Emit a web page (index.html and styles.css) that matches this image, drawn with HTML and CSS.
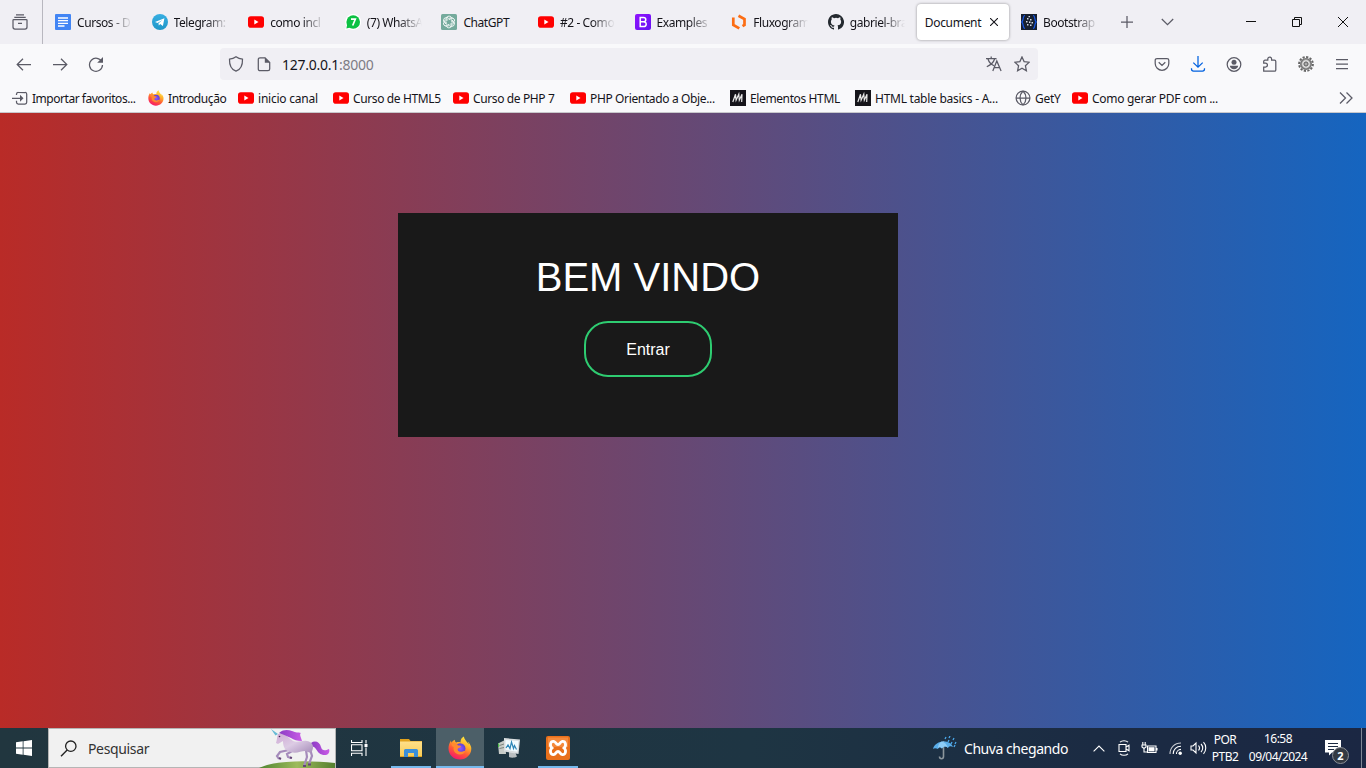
FILE: index.html
```html
<!DOCTYPE html>
<html lang="pt-BR">
<head>
<meta charset="utf-8">
<title>Document</title>
<link rel="stylesheet" href="styles.css">
</head>
<body>
<svg class="defs" width="0" height="0" aria-hidden="true">
  <defs>
    <linearGradient id="fxbody" x1=".8" y1="0" x2=".3" y2="1"><stop offset="0" stop-color="#fff044"/><stop offset=".35" stop-color="#ffb22b"/><stop offset=".65" stop-color="#ff5a36"/><stop offset="1" stop-color="#f5156c"/></linearGradient>
    <radialGradient id="fxglobe"><stop offset="0" stop-color="#9059ff"/><stop offset="1" stop-color="#5b3fd6"/></radialGradient>
    <linearGradient id="tele" x1="0" y1="0" x2="0" y2="1"><stop offset="0" stop-color="#37aee2"/><stop offset="1" stop-color="#1e96c8"/></linearGradient>
    <linearGradient id="bs" x1="0" y1="0" x2="1" y2="1"><stop offset="0" stop-color="#9013fe"/><stop offset="1" stop-color="#6610f2"/></linearGradient>
    <linearGradient id="coat" x1="0" y1="0" x2="1" y2="1"><stop offset="0" stop-color="#cfa9d4"/><stop offset=".5" stop-color="#dccbe4"/><stop offset="1" stop-color="#a58cb8"/></linearGradient>
    <linearGradient id="mane" x1="0" y1="0" x2="1" y2="0"><stop offset="0" stop-color="#8b3cc4"/><stop offset="1" stop-color="#c95be6"/></linearGradient>
    <linearGradient id="hill" x1="0" y1="0" x2="1" y2="0"><stop offset="0" stop-color="#4f8430"/><stop offset=".5" stop-color="#9dbb5b"/><stop offset="1" stop-color="#557f2f"/></linearGradient>
    <linearGradient id="folder" x1="0" y1="0" x2="0" y2="1"><stop offset="0" stop-color="#ffe08a"/><stop offset="1" stop-color="#f9cc56"/></linearGradient>
    <symbol id="yt" viewBox="0 0 16 16"><rect y="2.300" width="16" height="11.400" rx="2.800" fill="#f00"/><path d="M6.300 5.600v4.800L10.500 8z" fill="#fff"/></symbol>
    <symbol id="fx" viewBox="0 0 24 24"><path d="M22.500 9.500c-.6-1.700-1.900-3.200-2.600-3.700.5 1 .8 2 .9 2.800-1.200-2.900-4.300-4.200-4.900-8.200C12.500 2.200 12.500 5 12.600 6.500 11.500 6 9.700 5.900 8.300 6.500 6.900 5.800 6.800 4.200 6.800 3.700 4.900 4.500 3.900 6 3.700 6.500 3.100 6 3 4.900 3 4.400 1.200 7 .5 9.500.5 12.500c0 6.200 5 11 11.400 11 6.300 0 11.400-5 11.400-10.800 0-1-.2-2.200-.8-3.200z" fill="url(#fxbody)"/><circle cx="12.200" cy="12.500" r="5.300" fill="url(#fxglobe)"/><path d="M3.500 8c3-1.500 5.500-.5 6.500 1.500 1.500 0 3 .2 3 1-.3 1.300-2.600 1.400-3.200 2.300-.5 1 .3 3 3 3 2.200 0 3.500-1.500 4.500-1-.5 2.700-3 4-5.800 3.700C7 18 4.500 14 5.800 11c-1-.2-2-1-2.300-3z" fill="#ff8a2f"/></symbol>
    <symbol id="mb" viewBox="0 0 16 16"><path fill="#15141a" d="M0 0h16v16H0z"/><path d="M2.800 12 5.500 4.200l.6 6 2.700-6 .5 6 2.700-6-.3 7.800" fill="none" stroke="#e8e8e8" stroke-width="1.200"/></symbol>
  </defs>
</svg>

<header class="browser">
  <div class="tabstrip">
    <div class="fxview"><svg width="16" height="16" viewBox="0 0 16 16" class="ln"><path d="M1 6.300A.8.8 0 0 1 1.800 5.500h12.400a.8.8 0 0 1 .8.800V13a2 2 0 0 1-2 2H3a2 2 0 0 1-2-2zM2.300 3.300h11.400M4 .9h8M6 9.300h4"/></svg></div>
    <div class="tabs">
      <div class="tab"><svg class="ic" viewBox="0 0 16 16"><rect width="16" height="16" rx="1" fill="#4285f4"/><path d="M3 4h10M3 6.700h10M3 9.400h10M3 12h6.500" stroke="#fff" stroke-width="1.300"/></svg><span class="t">Cursos - D</span></div>
      <div class="tab"><svg class="ic" viewBox="0 0 16 16"><circle cx="8" cy="8" r="8" fill="url(#tele)"/><path d="M3 7.900 12.400 4.200 10.900 12 8.200 10.100 6.800 11.500 6.500 9.200 10.800 5.700 5.500 8.900z" fill="#fff"/></svg><span class="t">Telegram:</span></div>
      <div class="tab"><svg class="ic"><use href="#yt"/></svg><span class="t">como incl</span></div>
      <div class="tab"><svg class="ic" viewBox="0 0 16 16"><path d="M0 16 1.300 12A8 8 0 1 1 4.500 15z" fill="#fff"/><circle cx="8.200" cy="8" r="6.800" fill="#0cc143"/><path d="M1.400 14.500 2.300 10l3 3.500z" fill="#0cc143"/><path d="M6 5.200h4.300L7.700 11.500" fill="none" stroke="#fff" stroke-width="1.700"/></svg><span class="t">(7) WhatsA</span></div>
      <div class="tab"><svg class="ic" viewBox="0 0 16 16"><rect width="16" height="16" rx="1.500" fill="#74aa9c"/><g fill="none" stroke="#fff" stroke-width=".8"><path id="petal" d="M6 6.900V4.400a2.300 2.300 0 0 1 4.200-1.300M6.800 5.200 9.200 3.800a2.300 2.300 0 0 1 3.100 1.100"/><use href="#petal" transform="rotate(60 8 8)"/><use href="#petal" transform="rotate(120 8 8)"/><use href="#petal" transform="rotate(180 8 8)"/><use href="#petal" transform="rotate(240 8 8)"/><use href="#petal" transform="rotate(300 8 8)"/></g></svg><span class="t full">ChatGPT</span></div>
      <div class="tab"><svg class="ic"><use href="#yt"/></svg><span class="t">#2 - Como</span></div>
      <div class="tab"><svg class="ic" viewBox="0 0 16 16"><rect width="16" height="16" rx="2" fill="url(#bs)"/><path d="M5.200 3.500h3.300c3 0 3 4.200.2 4.300 3.400 0 3.200 4.700 0 4.700H5.200zM5.200 7.800h3.500" fill="none" stroke="#fff" stroke-width="1.500"/></svg><span class="t">Examples</span></div>
      <div class="tab"><svg class="ic" viewBox="0 0 16 16"><path d="M7.500 1.800 13.500 5v6l-2 1.200M2.300 3.600v7.300l6 3.500" fill="none" stroke="#fc6d14" stroke-width="2.700"/></svg><span class="t">Fluxogram</span></div>
      <div class="tab"><svg class="ic" viewBox="0 0 16 16"><path fill="#24292f" d="M8 0C3.580 0 0 3.580 0 8c0 3.540 2.290 6.530 5.470 7.590.4.070.55-.17.55-.38 0-.19-.01-.82-.01-1.490-2.010.37-2.530-.49-2.690-.94-.09-.23-.48-.94-.82-1.130-.28-.15-.68-.52-.01-.53.63-.01 1.080.58 1.230.82.72 1.210 1.870.87 2.330.66.07-.52.28-.87.51-1.070-1.780-.2-3.640-.89-3.640-3.950 0-.87.31-1.590.82-2.150-.08-.2-.36-1.020.08-2.120 0 0 .67-.21 2.200.82a7.600 7.600 0 0 1 4 0c1.530-1.040 2.200-.82 2.200-.82.44 1.100.16 1.920.08 2.120.51.56.82 1.270.82 2.150 0 3.070-1.870 3.750-3.650 3.950.29.25.54.73.54 1.480 0 1.070-.01 1.930-.01 2.200 0 .21.15.46.55.38A8 8 0 0 0 8 0z"/></svg><span class="t">gabriel-bra</span></div>
      <div class="tab active"><span>Document</span><svg width="8" height="8" viewBox="0 0 8 8" class="close"><path d="M0 0 8 8M8 0 0 8"/></svg></div>
      <div class="tab"><svg class="ic" viewBox="0 0 16 16"><path fill="#18202f" d="M0 0h16v16H0z"/><path d="M4 1.500C1.500 1.500 3 6 .8 8c2.200 2 .7 6.500 3.200 6.500M12 1.500c2.500 0 1 4.500 3.200 6.500-2.200 2-.7 6.500-3.200 6.500" fill="none" stroke="#1557e6" stroke-width="1.200"/><path d="M6 4h1.500v1.500H6zM9 5h1.500v1.500H9zM5 7h1.500v1.500H5zM8 7.500h1.500V9H8zM6 10h1.500v1.500H6zM9 10.500h1.500V12H9zM7.500 2H9v1.200H7.500zM10.500 8H12v1.500h-1.500z" fill="#d4d9e4"/></svg><span class="t">Bootstrap</span></div>
    </div>
    <svg class="plus ln" width="12" height="12" viewBox="0 0 12 12"><path d="M6 0v12M0 6h12"/></svg>
    <svg class="chev ln" width="13" height="8" viewBox="0 0 13 8"><path d="M.8 1l5.700 5.700L12.200 1"/></svg>
    <div class="winbtns">
      <svg width="12" height="12" viewBox="0 0 12 12"><path d="M1 5.500h10"/></svg>
      <svg width="12" height="12" viewBox="0 0 12 12"><path d="M1.500 3.500h7v7h-7zM3.500 3V1.500h7v7H9"/></svg>
      <svg width="12" height="12" viewBox="0 0 12 12"><path d="M1 1l10 10M11 1 1 11"/></svg>
    </div>
  </div>

  <div class="navbar">
    <div class="nav">
      <svg class="ic ln" viewBox="0 0 16 16"><path d="M15 8.500H1.500M7 2.700 1.200 8.500 7 14.300"/></svg>
      <svg class="ic ln" viewBox="0 0 16 16"><path d="M1 8.500h13.500M9 2.700l5.800 5.800L9 14.300"/></svg>
      <svg class="ic ln" viewBox="0 0 16 16"><path d="M13.900 6A6.500 6.500 0 1 0 14.500 9"/><path d="M15 1v5.800H9.200z" fill="#5b5b66" stroke="none"/></svg>
    </div>
    <div class="urlbar">
      <svg class="ic ln" viewBox="0 0 16 16"><path d="M8 .8C6 2.300 3.800 3 1.500 3.200 1.300 9 3 13.300 8 15.200c5-1.900 6.700-6.200 6.500-12C12.200 3 10 2.300 8 .8z"/></svg>
      <svg class="ic ln page" viewBox="0 0 16 16"><path d="M9 1.800H4A1.700 1.700 0 0 0 2.300 3.500v9.500A1.700 1.700 0 0 0 4 14.700h8a1.700 1.700 0 0 0 1.700-1.700V6.500z"/><path d="M8.800 1.300v5.400h5.400z" fill="#5b5b66" stroke="none"/></svg>
      <span class="url">127.0.0.1<i>:8000</i></span>
      <svg class="ic ln" viewBox="0 0 16 16"><path d="M0 2.500h10.500M5.200.5v2M8.700 2.700C7.700 6 4.500 9 .8 10.800M2 3c1 3.300 3.700 5.700 6 6.800M6.800 15l4-10 4.300 10M8.200 11.500h5.400"/></svg>
      <svg class="ic ln star" viewBox="0 0 16 16"><path d="m8 .9 2.100 4.700 5.100.6-3.800 3.500 1 5L8 12.200l-4.400 2.500 1-5L.8 6.200l5.100-.6z"/></svg>
    </div>
    <div class="tools">
      <svg class="ic ln" viewBox="0 0 16 16"><path d="M3 2.500h10a1.800 1.800 0 0 1 1.800 1.800V7.500A6.800 6.800 0 0 1 1.200 7.500V4.300A1.800 1.800 0 0 1 3 2.500zM4.700 6.300 8 9.500l3.300-3.200"/></svg>
      <svg class="ic ln blue" viewBox="0 0 16 16"><path d="M8 0v11M3.300 6.600 8 11.200l4.700-4.600M1.500 12.300v.8a2 2 0 0 0 2 2h9a2 2 0 0 0 2-2v-.8"/></svg>
      <svg class="ic ln" viewBox="0 0 16 16"><circle cx="8" cy="8.500" r="6.800"/><circle cx="8" cy="6.300" r="2.500" fill="#5b5b66" stroke="none"/><path d="M3.800 9.800h8.400c-.3 2-2 3.500-4.200 3.500s-3.900-1.500-4.200-3.500z" fill="#5b5b66" stroke="none"/></svg>
      <svg class="ic ln" viewBox="0 0 16 16"><path d="M1.700 15.200V11h1.800a1.900 1.900 0 0 0 0-3.800H1.700V5.500A1.300 1.300 0 0 1 3 4.200h2.800V3a1.900 1.900 0 0 1 3.800 0v1.200h2.900a1.300 1.300 0 0 1 1.300 1.300v8.400a1.300 1.300 0 0 1-1.300 1.300z"/></svg>
      <svg class="ic" viewBox="0 0 16 16"><circle cx="8" cy="8" r="6.900" fill="none" stroke="#666" stroke-width="2" stroke-dasharray="2.200 1.400"/><circle cx="8" cy="8" r="5.200" fill="#bdbdbd" stroke="#777" stroke-width="1.600"/><circle cx="8" cy="8" r="3.200" fill="none" stroke="#e6e6e6"/><circle cx="8" cy="8" r="2" fill="#aaa" stroke="#666"/></svg>
      <svg class="ic ln" viewBox="0 0 16 16"><path d="M2 3.500h12M2 8h12M2 12.500h12"/></svg>
    </div>
  </div>

  <div class="bookmarks">
    <div class="bm b1"><svg class="ic ln" viewBox="0 0 16 16"><path d="M4.500 5V4A1.800 1.800 0 0 1 6.300 2.500H13A1.700 1.700 0 0 1 14.700 4v8.300A1.700 1.700 0 0 1 13 14H6.300a1.800 1.800 0 0 1-1.800-1.700v-1.500M0 8.300h9"/><path d="M8 4.800v7l3.500-3.500z" fill="#5b5b66" stroke="none"/></svg><span>Importar favoritos...</span></div>
    <div class="bm b2"><svg class="ic"><use href="#fx"/></svg><span>Introdução</span></div>
    <div class="bm b3"><svg class="ic"><use href="#yt"/></svg><span>inicio canal</span></div>
    <div class="bm b4"><svg class="ic"><use href="#yt"/></svg><span>Curso de HTML5</span></div>
    <div class="bm b5"><svg class="ic"><use href="#yt"/></svg><span>Curso de PHP 7</span></div>
    <div class="bm b6"><svg class="ic"><use href="#yt"/></svg><span>PHP Orientado a Obje...</span></div>
    <div class="bm b7"><svg class="ic"><use href="#mb"/></svg><span>Elementos HTML</span></div>
    <div class="bm b8"><svg class="ic"><use href="#mb"/></svg><span>HTML table basics - A...</span></div>
    <div class="bm b9"><svg class="ic ln" viewBox="0 0 16 16"><circle cx="8" cy="8" r="6.900"/><path d="M1 8h14M8 1C4 5 4 11 8 15M8 1c4 4 4 10 0 14"/></svg><span>GetY</span></div>
    <div class="bm b10"><svg class="ic"><use href="#yt"/></svg><span>Como gerar PDF com ...</span></div>
    <svg class="more ln" width="14" height="12" viewBox="0 0 14 12"><path d="M1 .5 6.500 6 1 11.500M7.500.5 13 6l-5.500 5.500"/></svg>
  </div>
</header>

<main class="page-body">
  <section class="card">
    <h1>BEM VINDO</h1>
    <a class="enter">Entrar</a>
  </section>
</main>

<footer class="taskbar">
  <div class="start"><svg width="16" height="16" viewBox="0 0 16 16"><path fill="#fff" d="M0 2.200 6.700 1.300v6.300H0zM7.500 1.200 16 0v7.600H7.500zM0 8.400h6.700v6.300L0 13.800zM7.500 8.400H16V16l-8.500-1.200z"/></svg></div>
  <div class="search">
    <svg width="17" height="17" viewBox="0 0 17 17"><circle cx="10.800" cy="6.200" r="5.200" fill="none" stroke="#222" stroke-width="1.300"/><path d="M7.200 10 1 16.200" stroke="#222" stroke-width="1.400"/></svg>
    <span>Pesquisar</span>
    <svg class="unicorn" width="76" height="39" viewBox="0 0 76 39">
      <path d="M0 39C16 31 50 31 76 34v5z" fill="url(#hill)"/>
      <path d="M52 14c4-3 9-1 10 4 1 4 4 4 8 2 2 6-5 8-10 4-3-3-3-6-8-7z" fill="url(#mane)"/>
      <path d="M30 21l-9 2-3 4 2 3M33 22l-5 3 1 3 3 1M51 20l2 7-3 8M47 21l1 7-3 9" fill="none" stroke="#a58bbb" stroke-width="2.200"/>
      <path d="M20 29l2 1M31 28.500l2 .5M44 37h3M49 35.500h3" stroke="#644577" stroke-width="2"/>
      <path d="M19 5l4-1c3 1 7 5 11 8 4 2 9-1 14 0 6 1 8 6 4 12l-6-2c-4 0-9 3-14 1-6-1-8-5-8-11l-5 3-2-1c1-3 1-6 2-9z" fill="url(#coat)"/>
      <path d="M20 4c5-4 9-3 13-2 4 2 6 1 9 2-2 1 0 4 1 8-5 0-8-1-11-3-4-2-7-3-12-5z" fill="url(#mane)"/>
      <path d="M19 5 12 0l4.500 6.500z" fill="#65bad5"/><circle cx="20.500" cy="7.500" r=".8" fill="#3b244c"/>
    </svg>
  </div>
  <div class="apps">
    <div class="app"><svg width="18" height="16" viewBox="0 0 18 16" fill="none" stroke="#fff" stroke-width="1.100"><path d="M.5 0v2.500h10.500V0M.5 4.800h10.500v6H.5zM.5 16v-2.800h10.500V16M15 0v3.500M15 7.500V16"/><path d="M13.500 4h3v3h-3z" fill="#fff" stroke="none"/></svg></div>
    <div class="app open"><svg width="22" height="20" viewBox="0 0 22 20"><path d="M0 1h9l1.500 2H22v16H0z" fill="#e2a21c"/><path d="M0 3.500h22V18H0z" fill="url(#folder)"/><path d="M4 19v-6.500a1.500 1.500 0 0 1 1.500-1.500h11a1.500 1.500 0 0 1 1.500 1.500V19h-4v-4H8v4z" fill="#3b8fd8"/></svg></div>
    <div class="app open on"><svg width="24" height="24"><use href="#fx"/></svg></div>
    <div class="app"><svg width="24" height="24" viewBox="0 0 24 24"><path d="M1 7.500 8 4l1 14H2z" fill="#c8ccc8"/><path d="M2.500 9.500 7 8M2.500 12.500 7 11.500" stroke="#7c837f"/><path d="M1 7.500h1.200V11H1z" fill="#4dc247"/><path d="M12 16h6l2 4.500c-2 1.500-6 1.500-8 .5z" fill="#b9bec0"/><path d="m7 2 16 1.500L21.500 18 7 15.500z" fill="#d9dddf"/><path d="m8.500 4 13 1-1.200 10.800L8.500 13.800z" fill="#f2fbff"/><path d="m9 12 2-3 2 3.500 1.500-6.500 2 6.500 1-3 2 4" fill="none" stroke="#2d86b7" stroke-width="1.200"/></svg></div>
    <div class="app open"><svg width="24" height="24" viewBox="0 0 24 24"><rect width="24" height="24" rx="2" fill="#e9701b"/><path d="M2 1.500h20V11H2z" fill="#f58a3c"/><path d="M8 5.500c-4-.5-4.500 4.500-2 6.500-2.500 2-2 7 2 6.500 2-.5 2-3 4-3s2 2.500 4 3c4 .5 4.500-4.500 2-6.500 2.500-2 2-7-2-6.500-2 .5-2 3-4 3s-2-2.500-4-3z" fill="none" stroke="#fff" stroke-width="2.800"/></svg></div>
  </div>
  <div class="weather">
    <svg width="24" height="24" viewBox="0 0 24 24"><path d="M10.500 5v15.500c0 3-4 3-4 0" fill="none" stroke="#8c969c" stroke-width="1.600"/><path d="M0 13C2 4 17 3 20 11c-2-1-4-1-5 1-2-2-4-2-6 .5-2-2-3-1.500-4 .5-2-1-4-1-5 0z" fill="#59ade9"/><path d="M5 12C5 9 7 6 9 5.500c3 1 5 3 6 6.500-2-2-4-2-6 .5-2-2-3-1.500-4-.5z" fill="#8dccf6"/><path d="M13 1l-1 2M17 0l-1 2M16 4l-1 2M21 2l-1 2M19 6l-1 2M23 6l-1 2M22 9l-1 2" stroke="#4ba9eb" stroke-width="1.300"/></svg>
    <span>Chuva chegando</span>
  </div>
  <div class="tray">
    <svg width="12" height="7" viewBox="0 0 12 7"><path d="M.6 6.400 6 1l5.400 5.400"/></svg>
    <svg width="12" height="18" viewBox="0 0 12 18"><path d="M1 5.500h7v7H1zM8 8l3-1.700v5.400L8 10M2 3.200C4 1.200 8 1.200 10 3.200M2 14.800c2 2 6 2 8 0"/></svg>
    <svg width="17" height="13" viewBox="0 0 17 13"><path d="M6.500 4h8.500v6.500H6.500zM16 6v2.500M1 3h4v2L3 6.500 1 5zM1.800 0v3M4.200 0v3M3 6v4h3"/><path d="M7.500 5.200h6v4.200h-6z" fill="#fff" stroke="none"/></svg>
    <svg width="13" height="14" viewBox="0 0 13 14"><path d="M1 13C1 6.500 5.500 2 12 2" stroke-opacity=".75"/><path d="M4.200 13c0-4.500 3.300-7.800 7.800-7.800M7.400 13c0-2.500 2-4.600 4.600-4.600"/><circle cx="11.200" cy="12.200" r="1.700" fill="#fff" stroke="none"/></svg>
    <svg width="17" height="14" viewBox="0 0 17 14"><path d="M1 5h2L6 2v10L3 9H1zM8.500 4.500c1.300 1.500 1.300 3.500 0 5M11 3c2.300 2.300 2.300 5.700 0 8M13.500 1.200c3 3.200 3 8.400 0 11.600"/></svg>
  </div>
  <div class="stack lang"><span>POR</span><span>PTB2</span></div>
  <div class="stack clock"><span>16:58</span><span>09/04/2024</span></div>
  <div class="notif"><svg width="16" height="16" viewBox="0 0 16 16"><path fill="#fff" d="M0 0h16v12.500H7L4 15.500v-3H0z"/><path d="M3 3.500h10M3 6.500h10M3 9.500h6" stroke="#1c2a42"/></svg><b>2</b></div>
</footer>
</body>
</html>
```
FILE: styles.css
```css
* { box-sizing: border-box; }
body {
  margin: 0;
  width: 1366px;
  height: 768px;
  overflow: hidden;
  display: flex;
  flex-direction: column;
  font-family: "Noto Sans", "Open Sans", sans-serif;
  font-size: 12px;
  color: #15141a;
}
.defs { position: absolute; }
svg { display: block; flex: none; }
span { white-space: nowrap; }
.ic { width: 16px; height: 16px; }
.ln { fill: none; stroke: #5b5b66; stroke-width: 1.25; }
.blue { stroke: #0061e0; }

/* Browser chrome */
.browser { height: 113px; flex: none; background: #f9f9fb; border-bottom: 1px solid #c8c8cc; }
.tabstrip { height: 44px; display: flex; align-items: center; background: #f0eff4; }
.fxview { width: 43px; height: 44px; padding: 14px 0 0 12px; border-right: 1px solid #b8b7bf; }
.tabs { display: flex; margin-left: 4px; }
.tab { width: 96.6px; height: 36px; display: flex; align-items: center; padding-left: 8px; gap: 6px; letter-spacing: -0.42px; }
.tab .t { width: 66px; margin-right: -6px; -webkit-mask-image: linear-gradient(90deg, #000 32px, transparent 55px); mask-image: linear-gradient(90deg, #000 32px, transparent 55px); }
.tab .t.full { -webkit-mask-image: none; mask-image: none; }
.tab.active { width: 92px; margin-right: 4.300px; margin-left: .4px; gap: 9px; background: #fff; border-radius: 4px; box-shadow: 0 0 3px rgba(0, 0, 0, .4); letter-spacing: -0.3px; }
.close { fill: none; stroke: #15141a; stroke-width: 1.100; }
.plus { margin-left: 11px; }
.chev { margin-left: 28px; }
.winbtns { display: flex; gap: 34px; margin-left: 71px; fill: none; stroke: #111; }

.navbar { height: 40px; display: flex; align-items: center; }
.nav { display: flex; gap: 20px; padding-left: 16px; width: 220px; }
.urlbar { width: 818px; height: 32px; padding: 0 8px; display: flex; align-items: center; border-radius: 4px; background: #f0eff4; }
.page { margin-left: 12px; }
.url { flex: 1; margin-left: 10px; font-size: 14px; letter-spacing: -0.25px; }
.url i { font-style: normal; color: #7d7c84; }
.star { margin-left: 12px; }
.tools { display: flex; gap: 20px; margin-left: 116px; }

.bookmarks {
  height: 28px;
  display: grid;
  grid-template-columns: 136px 90px 95px 120px 117px 160px 125px 160px 57px 267px 14px;
  align-items: center;
  padding-left: 12px;
  letter-spacing: -0.3px;
}
.bm { display: flex; align-items: center; gap: 4px; }
.b1 { letter-spacing: -0.47px; }
.b2 { letter-spacing: -0.4px; }
.b3 { letter-spacing: -0.22px; }
.b4, .b5, .b7 { letter-spacing: -0.38px; }
.b6 { letter-spacing: -0.36px; }
.b8 { letter-spacing: -0.26px; }

/* Page */
.page-body { flex: 1; min-height: 0; padding: 100px 0 0 398px; background: linear-gradient(90deg, #b92b27, #1565c0); }
.card { width: 500px; height: 224px; display: flex; flex-direction: column; align-items: center; background: #191919; color: #fff; font-family: "Liberation Sans", Arial, sans-serif; }
.card h1 { margin: 41px 0 0; font-size: 40px; line-height: 47px; font-weight: 400; }
.enter { width: 128px; height: 56px; margin-top: 20px; border: 2px solid #2ecc71; border-radius: 24px; font-size: 16px; line-height: 54px; text-align: center; }

/* Taskbar */
.taskbar { height: 40px; flex: none; display: flex; background: linear-gradient(90deg, #21363f, #1e3543 55%, #1b2b43 80%, #1b2743); color: #fff; }
.start { width: 48px; display: grid; place-items: center; }
.search { width: 288px; height: 40px; display: flex; align-items: center; padding-left: 11px; background: #f1f1f1; border: 1px solid #b5b5b5; color: #333; font-size: 14px; }
.search span { margin-left: 11px; letter-spacing: -0.35px; }
.unicorn { margin-left: auto; }
.apps { display: flex; gap: 1px; }
.app { width: 48px; height: 40px; display: grid; place-items: center; position: relative; }
.app:first-child { margin-right: 2px; }
.app.open::after { content: ""; position: absolute; left: 4px; right: 4px; bottom: 0; height: 2px; background: #76b9ed; }
.app.on { background: #4c5f68; }
.app.on::after { left: 0; right: 0; }
.weather { display: flex; align-items: center; gap: 7px; width: 160px; margin-left: 351px; font-size: 14px; letter-spacing: -0.45px; }
.tray { display: flex; align-items: center; gap: 11px; width: 119px; fill: none; stroke: #fff; stroke-width: 1.100; }
.tray svg:nth-child(2) { margin-left: 2px; }
.tray svg:last-child { margin-left: -3px; }
.stack { display: flex; flex-direction: column; align-items: center; line-height: 17px; letter-spacing: -0.55px; }
.lang { width: 28px; margin-left: -1px; padding-top: 3px; }
.clock { width: 60px; margin-left: 9px; padding-top: 2px; }
.clock span:last-child { margin-top: 1px; }
.notif { position: relative; width: 37px; height: 40px; padding-top: 12px; margin-left: 17px; border-right: 1px solid #7e8795; }
.notif b { position: absolute; left: 7px; top: 19px; width: 17px; height: 17px; border: 1px solid #8b8f96; border-radius: 50%; background: #343a43; font-size: 11px; line-height: 15px; text-align: center; }
```
